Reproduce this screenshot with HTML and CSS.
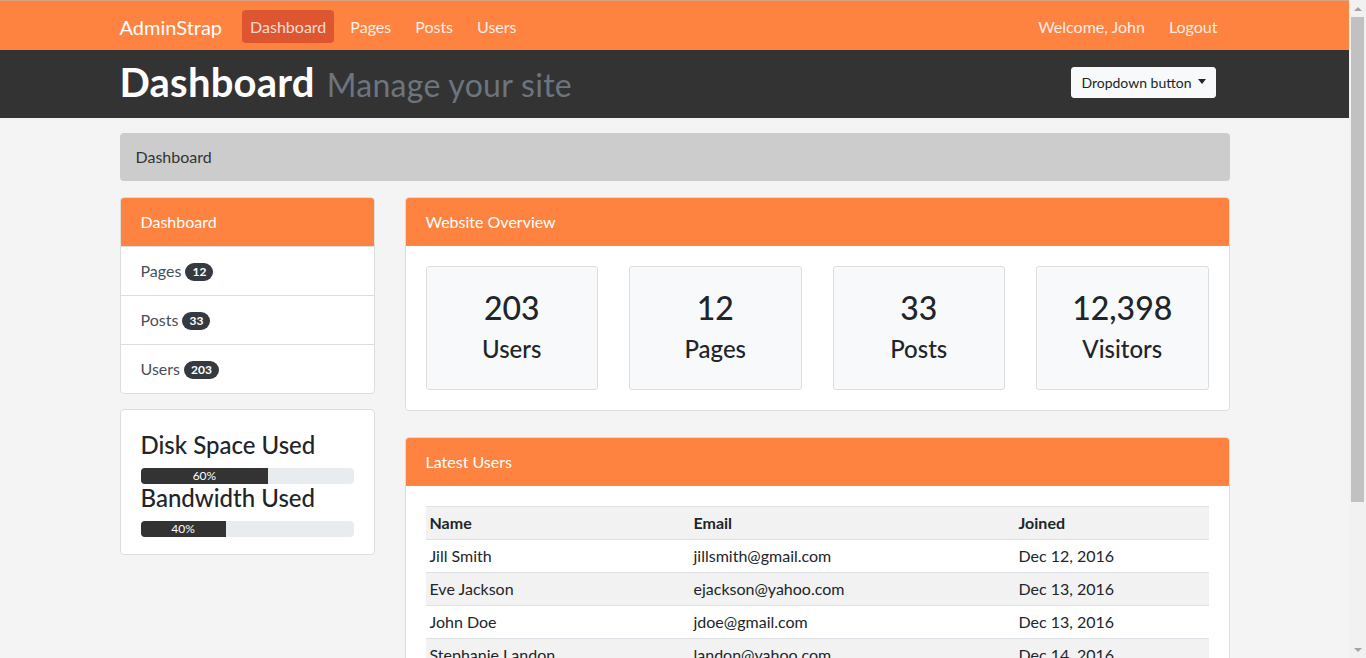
FILE: index.html
```html
<!DOCTYPE html>
<html lang="en">
<head>
<meta charset="utf-8">
<title>AdminStrap | Dashboard</title>
<link rel="stylesheet" href="styles.css">
</head>
<body>
<div class="page">
<nav class="navbar">
  <div class="container nav-inner">
    <div class="nav-left">
      <a class="brand" href="#">AdminStrap</a>
      <a class="nav-link active" href="#">Dashboard</a>
      <a class="nav-link" href="#">Pages</a>
      <a class="nav-link" href="#">Posts</a>
      <a class="nav-link" href="#">Users</a>
    </div>
    <div class="nav-right">
      <a class="nav-link" href="#">Welcome, John</a>
      <a class="nav-link" href="#">Logout</a>
    </div>
  </div>
</nav>

<header class="header">
  <div class="container header-inner">
    <h1 class="title">Dashboard <small>Manage your site</small></h1>
    <button class="btn-dropdown" type="button">Dropdown button <span class="caret"></span></button>
  </div>
</header>

<section class="container crumbs">
  <div class="breadcrumb">Dashboard</div>
</section>

<section class="container layout">
  <aside class="sidebar">
    <div class="list-group">
      <a class="list-item active" href="#">Dashboard</a>
      <a class="list-item" href="#">Pages <span class="badge">12</span></a>
      <a class="list-item" href="#">Posts <span class="badge">33</span></a>
      <a class="list-item" href="#">Users <span class="badge">203</span></a>
    </div>
    <div class="well">
      <h4>Disk Space Used</h4>
      <div class="progress"><div class="progress-bar" style="width:60%">60%</div></div>
      <h4>Bandwidth Used</h4>
      <div class="progress"><div class="progress-bar" style="width:40%">40%</div></div>
    </div>
  </aside>

  <main class="main">
    <div class="card">
      <div class="card-header">Website Overview</div>
      <div class="card-body stats">
        <div class="stat"><h2>203</h2><h4>Users</h4></div>
        <div class="stat"><h2>12</h2><h4>Pages</h4></div>
        <div class="stat"><h2>33</h2><h4>Posts</h4></div>
        <div class="stat"><h2>12,398</h2><h4>Visitors</h4></div>
      </div>
    </div>

    <div class="card">
      <div class="card-header">Latest Users</div>
      <div class="card-body">
        <table class="table">
          <tr><th class="c-name">Name</th><th class="c-email">Email</th><th>Joined</th></tr>
          <tr><td>Jill Smith</td><td>jillsmith@gmail.com</td><td>Dec 12, 2016</td></tr>
          <tr><td>Eve Jackson</td><td>ejackson@yahoo.com</td><td>Dec 13, 2016</td></tr>
          <tr><td>John Doe</td><td>jdoe@gmail.com</td><td>Dec 13, 2016</td></tr>
          <tr><td>Stephanie Landon</td><td>landon@yahoo.com</td><td>Dec 14, 2016</td></tr>
          <tr><td>Mike Johnson</td><td>mjohnson@gmail.com</td><td>Dec 15, 2016</td></tr>
        </table>
      </div>
    </div>
  </main>
</section>
</div>

<div class="scrollbar" aria-hidden="true">
  <span class="sb-arrow up"></span>
  <span class="sb-thumb"></span>
  <span class="sb-fill"></span>
  <span class="sb-arrow down"></span>
</div>
</body>
</html>
```

FILE: styles.css
```css
* { box-sizing: border-box; }

html, body {
  margin: 0;
  padding: 0;
}

body {
  font-family: "Lato", "Open Sans", "Liberation Sans", sans-serif;
  font-size: 16px;
  line-height: 1.5;
  color: #212529;
  background: #f4f4f4;
}

a { text-decoration: none; color: inherit; }

.page { margin-right: 17px; }

.container {
  width: 1140px;
  margin: 0 auto;
  padding: 0 15px;
}

/* Fake window scrollbar */
.scrollbar {
  position: fixed;
  top: 0;
  right: 0;
  width: 17px;
  height: 100vh;
  background: #f1f1f1;
  display: flex;
  flex-direction: column;
  align-items: center;
}
.sb-arrow {
  width: 17px;
  height: 17px;
  display: flex;
  align-items: center;
  justify-content: center;
  flex: none;
}
.sb-arrow::before {
  content: "";
  width: 0;
  height: 0;
  border-left: 4px solid transparent;
  border-right: 4px solid transparent;
}
.sb-arrow.up::before { border-bottom: 4px solid #a3a3a3; }
.sb-arrow.down::before { border-top: 4px solid #a3a3a3; }
.sb-thumb {
  width: 13px;
  height: 485px;
  background: #c1c1c1;
  flex: none;
}
.sb-fill { flex: 1; }

/* Navbar */
.navbar {
  background: #ff8340;
  border-top: 1px solid #e0a080;
  height: 50px;
}
.nav-inner {
  height: 49px;
  display: flex;
  align-items: center;
  justify-content: space-between;
  padding-top: 2px;
}
.nav-left, .nav-right {
  display: flex;
  align-items: center;
  gap: 8px;
}
.nav-right { margin-right: 4px; }
.brand {
  font-size: 20px;
  color: #fff;
  margin-right: 12px;
  line-height: 30px;
}
.nav-link {
  color: rgba(255, 255, 255, 0.88);
  padding: 5px 8px;
  line-height: 23px;
  border-radius: 4px;
}
.nav-link.active {
  background: #dd5630;
  color: rgba(255, 255, 255, 0.8);
}

/* Header */
.header {
  background: #333;
  color: #fff;
}
.header-inner {
  height: 68px;
  display: flex;
  align-items: center;
  justify-content: space-between;
}
.title {
  margin: 0;
  font-size: 40px;
  font-weight: 700;
  line-height: 1.2;
  margin-top: -4px;
  letter-spacing: 0.2px;
}
.title small {
  font-size: 32px;
  font-weight: 400;
  color: #6c757d;
  margin-left: 2px;
  letter-spacing: 0.3px;
}
.btn-dropdown {
  font-family: inherit;
  font-size: 14px;
  line-height: 21px;
  padding: 4px 9px;
  color: #212529;
  background: #f8f9fa;
  border: 1px solid #f8f9fa;
  border-radius: 3px;
  margin-right: 14px;
  margin-top: -4px;
  display: flex;
  align-items: center;
  gap: 6px;
}
.caret {
  display: inline-block;
  width: 0;
  height: 0;
  border-top: 5px solid #212529;
  border-left: 4px solid transparent;
  border-right: 4px solid transparent;
  margin-top: -2px;
}

/* Breadcrumb */
.crumbs { margin-top: 15px; margin-bottom: 16px; }
.breadcrumb {
  background: #ccc;
  border-radius: 4px;
  padding: 12px 16px;
  color: #333;
  line-height: 24px;
}

/* Layout */
.layout {
  display: flex;
  gap: 30px;
  align-items: flex-start;
}
.sidebar { width: 255px; flex: none; }
.main { flex: 1; min-width: 0; }

/* List group */
.list-group {
  display: flex;
  flex-direction: column;
  background: #fff;
  border: 1px solid #ddd;
  border-radius: 4px;
  overflow: hidden;
}
.list-item {
  padding: 12px 20px;
  line-height: 24px;
  color: #495057;
  border-top: 1px solid #ddd;
}
.list-item:first-child { border-top: 0; }
.list-item.active {
  background: #ff8340;
  color: #fff;
}
.badge {
  display: inline-block;
  background: #343a40;
  color: #fff;
  font-size: 12px;
  font-weight: 700;
  line-height: 1;
  padding: 3px 7px 3px;
  border-radius: 10px;
  vertical-align: 1px;
}

/* Well */
.well {
  margin-top: 15px;
  background: #fff;
  border: 1px solid #ddd;
  border-radius: 4px;
  padding: 21px 20px 17px;
}
.well h4 {
  margin: 0 0 8px;
  font-size: 24px;
  font-weight: 500;
  line-height: 1.2;
}
.progress {
  height: 16px;
  background: #e9ecef;
  border-radius: 4px;
  overflow: hidden;
  display: flex;
}
.progress-bar {
  background: #333;
  color: #fff;
  font-size: 12px;
  line-height: 16px;
  text-align: center;
}

/* Cards */
.card {
  background: #fff;
  border: 1px solid #ddd;
  border-radius: 4px;
  overflow: hidden;
  margin-bottom: 26px;
}
.card-header {
  background: #ff8340;
  color: #fff;
  padding: 12px 20px;
  line-height: 24px;
}
.card-body { padding: 20px; }

.stats {
  display: grid;
  grid-template-columns: repeat(4, 1fr);
  column-gap: 31px;
}
.stat {
  background: #f8f9fa;
  border: 1px solid #ddd;
  border-radius: 3px;
  padding: 22px 10px 17px;
  text-align: center;
}
.stat h2 {
  margin: 0 0 8px;
  font-size: 32px;
  font-weight: 500;
  line-height: 1.2;
}
.stat h4 {
  margin: 0 0 8px;
  font-size: 24px;
  font-weight: 500;
  line-height: 1.2;
}

/* Table */
.table {
  width: 100%;
  border-collapse: collapse;
}
.table th, .table td {
  text-align: left;
  padding: 4px;
  line-height: 24px;
  border-top: 1px solid #dee2e6;
}
.table th { font-weight: 700; }
.table tr:nth-child(odd) { background: #f2f2f2; }
.c-name { width: 264px; }
.c-email { width: 325px; }
```
